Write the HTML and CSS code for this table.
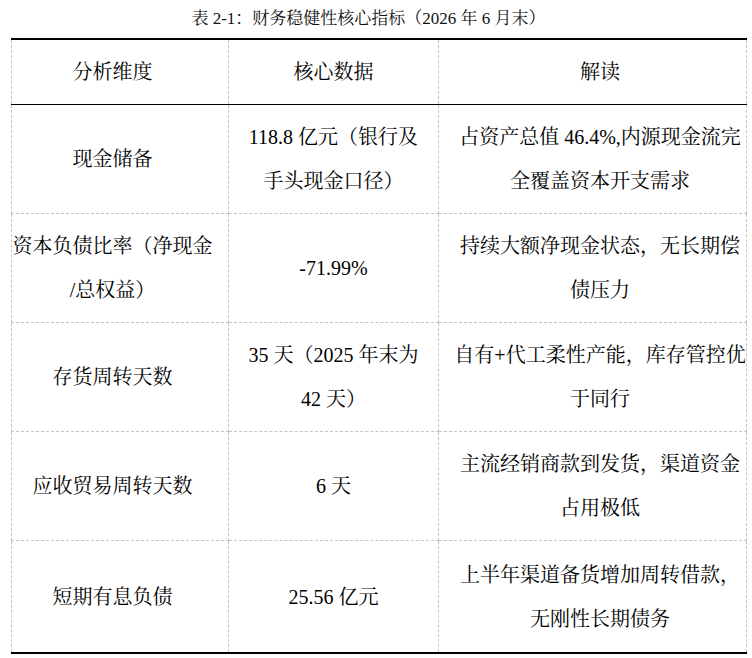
FILE: index.html
```html
<!DOCTYPE html>
<html lang="zh-CN">
<head>
<meta charset="utf-8">
<title>财务稳健性核心指标</title>
<link rel="stylesheet" href="styles.css">
</head>
<body>
<div class="page">
  <p class="caption">表 2-1：财务稳健性核心指标（2026 年 6 月末）</p>
  <table class="fin">
    <colgroup>
      <col class="c1"><col class="c2"><col class="c3">
    </colgroup>
    <thead>
      <tr>
        <th class="dim">分析维度</th>
        <th class="val">核心数据</th>
        <th class="note">解读</th>
      </tr>
    </thead>
    <tbody>
      <tr>
        <td class="dim">现金储备</td>
        <td class="val">118.8 亿元（银行及<br>手头现金口径）</td>
        <td class="note">占资产总值 46.4%,内源现金流完<br>全覆盖资本开支需求</td>
      </tr>
      <tr>
        <td class="dim">资本负债比率（净现金<br>/总权益）</td>
        <td class="val">-71.99%</td>
        <td class="note">持续大额净现金状态，无长期偿<br>债压力</td>
      </tr>
      <tr>
        <td class="dim">存货周转天数</td>
        <td class="val">35 天（2025 年末为<br>42 天）</td>
        <td class="note">自有+代工柔性产能，库存管控优<br>于同行</td>
      </tr>
      <tr>
        <td class="dim">应收贸易周转天数</td>
        <td class="val">6 天</td>
        <td class="note">主流经销商款到发货，渠道资金<br>占用极低</td>
      </tr>
      <tr class="last">
        <td class="dim">短期有息负债</td>
        <td class="val">25.56 亿元</td>
        <td class="note">上半年渠道备货增加周转借款，<br>无刚性长期债务</td>
      </tr>
    </tbody>
  </table>
</div>
</body>
</html>
```

FILE: styles.css
```css
html, body {
  margin: 0;
  padding: 0;
  background: #ffffff;
}

body {
  font-family: "Liberation Serif", "Noto Serif CJK SC", "Noto Sans CJK SC", serif;
  color: #000000;
}

.page {
  padding: 0 6px 0 11px;
}

.caption {
  margin: 0;
  height: 38px;
  line-height: 38px;
  font-size: 17px;
  text-align: center;
  padding-right: 20px;
  color: #111111;
}

.fin {
  border-collapse: collapse;
  table-layout: fixed;
  width: 735px;
}

.c1 { width: 217px; }
.c2 { width: 210px; }
.c3 { width: 308px; }

.fin th,
.fin td {
  font-weight: normal;
  font-size: 20px;
  line-height: 44px;
  text-align: center;
  vertical-align: middle;
  white-space: nowrap;
  padding: 0;
  border: 1px dashed #c4c4c4;
}

.fin thead th {
  height: 64px;
  border-top: 2px solid #000000;
  border-bottom: 1px solid #000000;
}

.fin tbody td {
  height: 108px;
}

.fin tbody .last td {
  height: 111px;
  border-bottom: 2px solid #000000;
}

.fin .dim {
  padding-right: 15px;
}

.fin .note {
  padding-left: 15px;
}
```
